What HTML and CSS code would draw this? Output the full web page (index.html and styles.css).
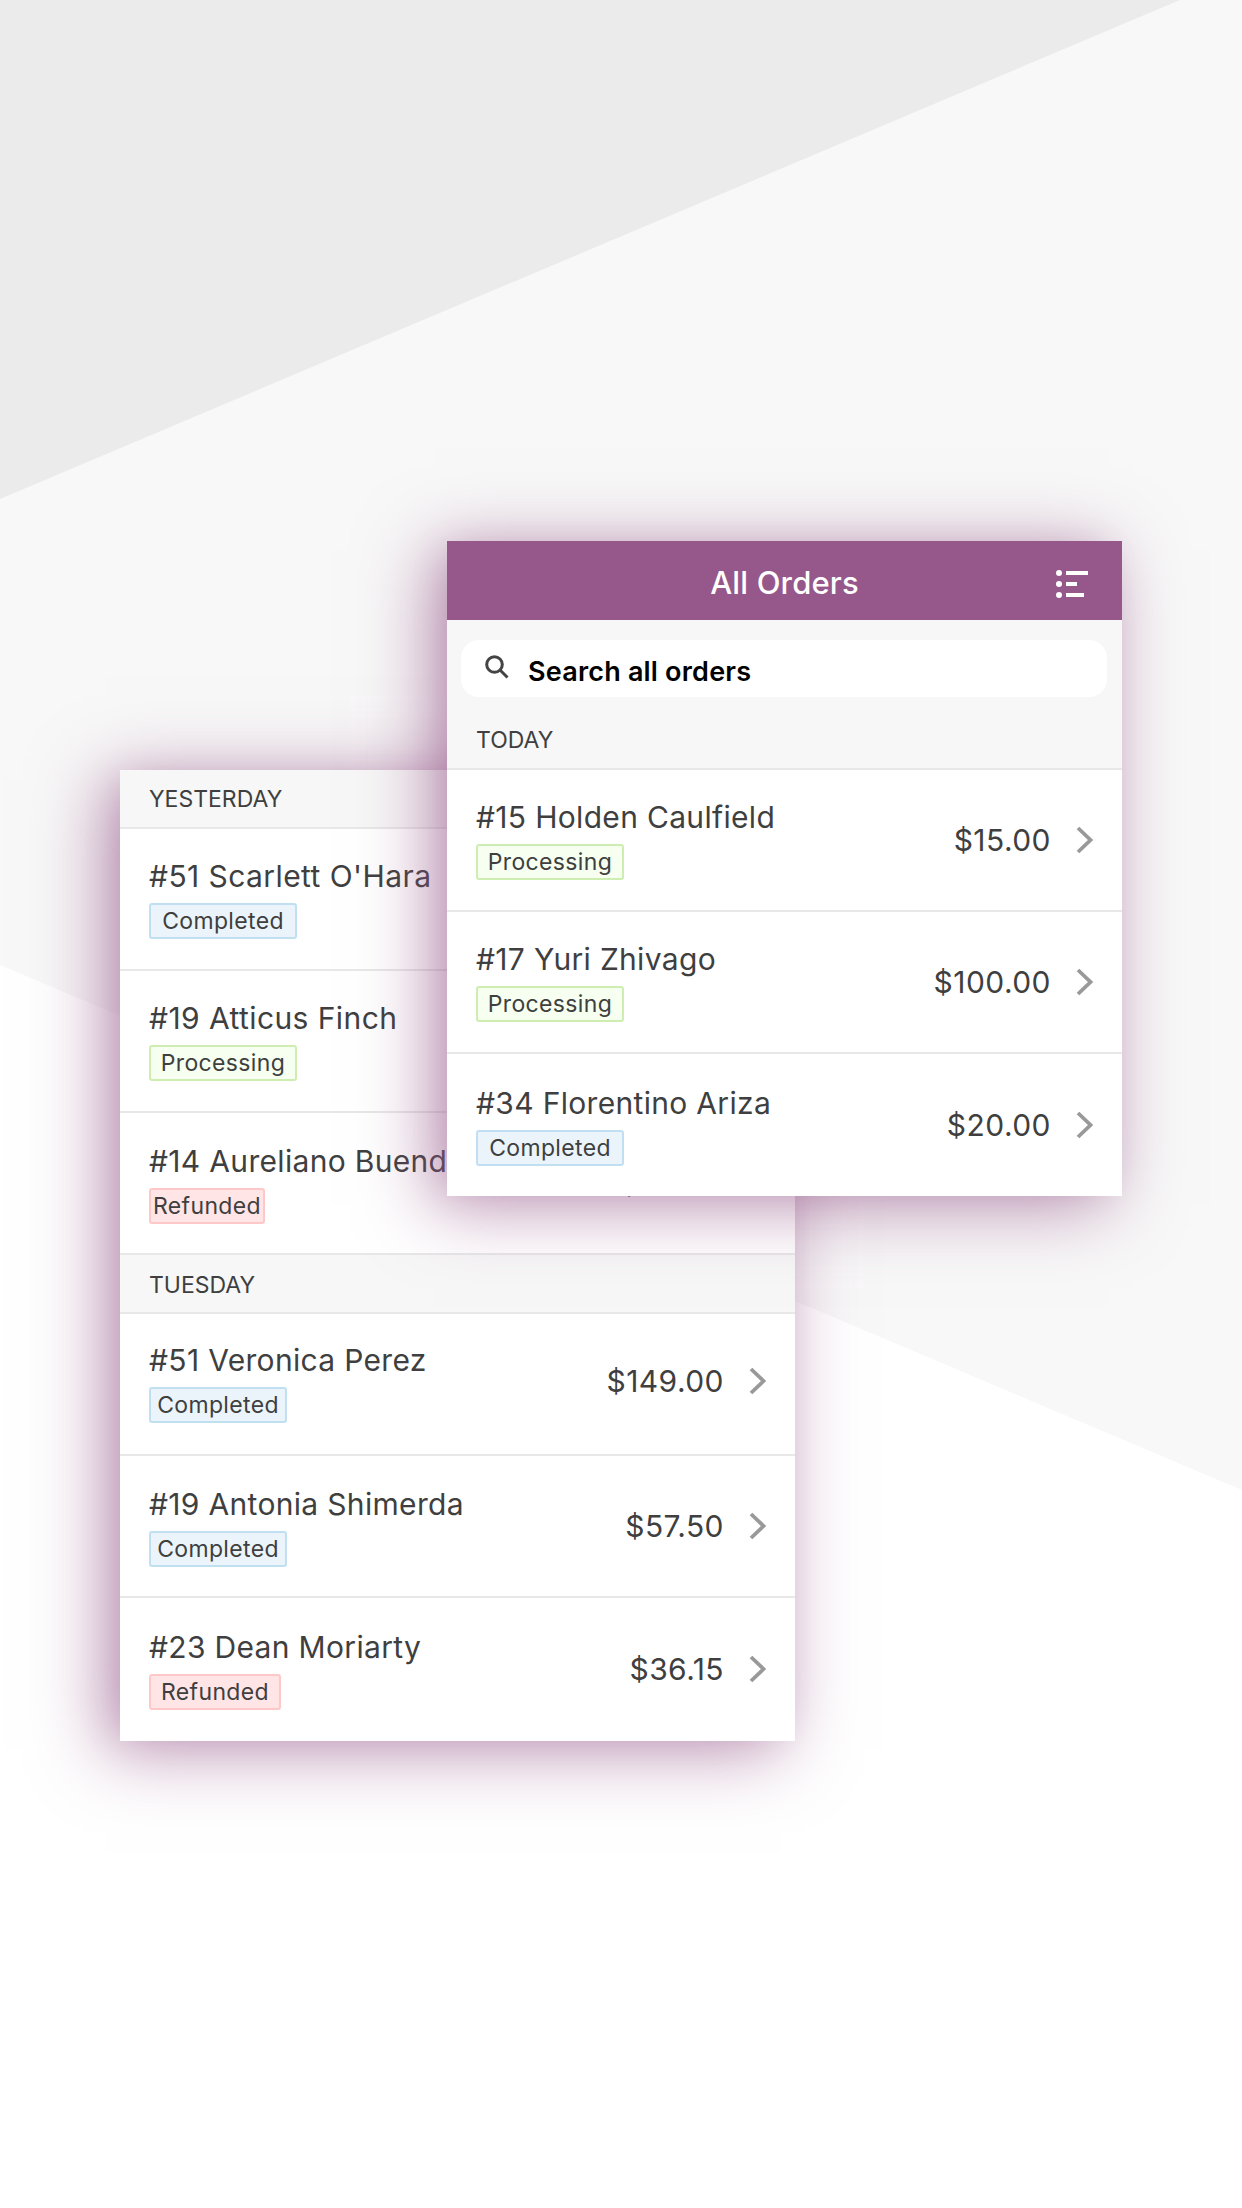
FILE: index.html
```html
<!DOCTYPE html>
<html lang="en">
<head>
<meta charset="utf-8">
<title>All Orders</title>
<link rel="stylesheet" href="styles.css">
</head>
<body>
<main class="stage">
  <svg class="backdrop" viewBox="0 0 1242 2208" aria-hidden="true">
    <polygon class="backdrop__light" points="0,0 1242,0 1242,1490 0,965"/>
    <polygon class="backdrop__dark" points="0,0 1180,0 0,499"/>
  </svg>

  <section class="card card--back">
    <h2 class="section-label">YESTERDAY</h2>
    <article class="row row--wide">
      <div class="row__info"><div class="row__name">#51 Scarlett O'Hara</div><span class="badge badge--completed badge--w148">Completed</span></div>
      <div class="row__price">$25.00</div>
      <svg class="chevron" viewBox="0 0 17 28"><path d="M2 2l12.500 12L2 26"/></svg>
    </article>
    <article class="row row--wide">
      <div class="row__info"><div class="row__name">#19 Atticus Finch</div><span class="badge badge--processing badge--w148">Processing</span></div>
      <div class="row__price">$42.00</div>
      <svg class="chevron" viewBox="0 0 17 28"><path d="M2 2l12.500 12L2 26"/></svg>
    </article>
    <article class="row">
      <div class="row__info"><div class="row__name">#14 Aureliano Buendía</div><span class="badge badge--refunded badge--w116">Refunded</span></div>
      <div class="row__price">$80.00</div>
      <svg class="chevron" viewBox="0 0 17 28"><path d="M2 2l12.500 12L2 26"/></svg>
    </article>
    <h2 class="section-label">TUESDAY</h2>
    <article class="row row--raised">
      <div class="row__info"><div class="row__name">#51 Veronica Perez</div><span class="badge badge--completed badge--w138">Completed</span></div>
      <div class="row__price">$149.00</div>
      <svg class="chevron" viewBox="0 0 17 28"><path d="M2 2l12.500 12L2 26"/></svg>
    </article>
    <article class="row">
      <div class="row__info"><div class="row__name">#19 Antonia Shimerda</div><span class="badge badge--completed badge--w138">Completed</span></div>
      <div class="row__price">$57.50</div>
      <svg class="chevron" viewBox="0 0 17 28"><path d="M2 2l12.500 12L2 26"/></svg>
    </article>
    <article class="row">
      <div class="row__info"><div class="row__name">#23 Dean Moriarty</div><span class="badge badge--refunded badge--w132">Refunded</span></div>
      <div class="row__price">$36.15</div>
      <svg class="chevron" viewBox="0 0 17 28"><path d="M2 2l12.500 12L2 26"/></svg>
    </article>
  </section>

  <section class="card card--front">
    <header class="appbar">
      <h1 class="appbar__title">All Orders</h1>
      <svg class="appbar__menu" viewBox="0 0 32 28" aria-hidden="true">
        <circle cx="3" cy="3" r="3"/><circle cx="3" cy="14" r="3"/><circle cx="3" cy="25" r="3"/>
        <rect x="10" y="1" width="22" height="4"/><rect x="10" y="12" width="11" height="4"/><rect x="10" y="23" width="18" height="4"/>
      </svg>
    </header>
    <div class="search-wrap">
      <div class="search">
        <svg class="search__icon" viewBox="0 0 24 24" aria-hidden="true"><circle cx="9.500" cy="9.500" r="7.800"/><path d="M15 15l7.500 7.500"/></svg>
        <span class="search__text">Search all orders</span>
      </div>
    </div>
    <h2 class="section-label">TODAY</h2>
    <article class="row">
      <div class="row__info"><div class="row__name">#15 Holden Caulfield</div><span class="badge badge--processing badge--w148">Processing</span></div>
      <div class="row__price">$15.00</div>
      <svg class="chevron" viewBox="0 0 17 28"><path d="M2 2l12.500 12L2 26"/></svg>
    </article>
    <article class="row">
      <div class="row__info"><div class="row__name">#17 Yuri Zhivago</div><span class="badge badge--processing badge--w148">Processing</span></div>
      <div class="row__price">$100.00</div>
      <svg class="chevron" viewBox="0 0 17 28"><path d="M2 2l12.500 12L2 26"/></svg>
    </article>
    <article class="row">
      <div class="row__info"><div class="row__name">#34 Florentino Ariza</div><span class="badge badge--completed badge--w148">Completed</span></div>
      <div class="row__price">$20.00</div>
      <svg class="chevron" viewBox="0 0 17 28"><path d="M2 2l12.500 12L2 26"/></svg>
    </article>
  </section>
</main>
</body>
</html>
```
FILE: styles.css
```css
* { box-sizing: border-box; }

html, body {
  margin: 0;
  background: #fff;
}

body {
  font-family: Inter, "Noto Sans", sans-serif;
  font-weight: 370;
  color: #3f3f3f;
}

.stage {
  position: relative;
  width: 1242px;
  height: 2208px;
  overflow: hidden;
  padding: 770px 0 0 120px;
}

.backdrop {
  position: absolute;
  inset: 0;
  width: 100%;
  height: 100%;
}
.backdrop__light { fill: #f8f8f8; }
.backdrop__dark { fill: #ebebeb; }

.card {
  position: relative;
  width: 675px;
  background: #f7f7f7;
  box-shadow:
    -14px 9px 68px rgba(150, 88, 138, 0.66),
    -10px 0 30px -6px rgba(150, 88, 138, 0.16);
}

.card--front {
  position: absolute;
  left: 447px;
  top: 541px;
}

.appbar {
  position: relative;
  height: 79px;
  padding-top: 4px;
  background: #96588a;
  display: flex;
  align-items: center;
  justify-content: center;
}
.appbar__title {
  margin: 0;
  font-size: 31px;
  font-weight: 500;
  letter-spacing: 0.15px;
  color: #fff;
}
.appbar__menu {
  position: absolute;
  right: 34px;
  top: 29px;
  width: 32px;
  height: 28px;
  fill: #fff;
}

.search-wrap {
  padding: 20px 15px 14px 14px;
}
.search {
  height: 57px;
  background: #fff;
  border-radius: 18px;
  display: flex;
  align-items: center;
  padding: 0 24px;
}
.search__icon {
  width: 24px;
  height: 24px;
  margin: -3px 19px 0 0;
  fill: none;
  stroke: #444;
  stroke-width: 3;
  flex: none;
}
.search__text {
  font-size: 27px;
  font-weight: 600;
  letter-spacing: 0.2px;
  color: #000;
  padding-top: 6px;
}

.section-label {
  margin: 0;
  height: 58.7px;
  padding: 2px 0 0 29px;
  display: flex;
  align-items: center;
  font-size: 23px;
  font-weight: 370;
  color: #3f3f3f;
  border-bottom: 2px solid #e8e8e8;
}

.row {
  height: 142.2px;
  background: #fff;
  border-bottom: 2px solid #e8e8e8;
  padding: 0 29px;
  display: flex;
  align-items: center;
}
.row:last-child { border-bottom: 0; }

.row__info {
  flex: 1;
  min-width: 0;
  display: flex;
  flex-direction: column;
  align-items: flex-start;
  gap: 9px;
}
.row__name {
  font-size: 30px;
  line-height: 36px;
  letter-spacing: 0.32px;
  white-space: nowrap;
}
.row--wide .row__name {
  letter-spacing: 0.42px;
}
.row__price {
  font-size: 30px;
  letter-spacing: 0.45px;
  margin-right: 25px;
}
.row--raised .row__price,
.row--raised .chevron {
  margin-top: -6px;
}
.row--raised .row__info {
  margin-top: -3px;
}

.chevron {
  width: 17px;
  height: 28px;
  flex: none;
  fill: none;
  stroke: #999;
  stroke-width: 3.800;
}

.badge {
  height: 36px;
  border: 2px solid;
  border-radius: 3px;
  font-size: 23px;
  letter-spacing: 0.35px;
  line-height: 30px;
  display: flex;
  align-items: center;
  justify-content: center;
}
.badge--completed { background: #ebf4fa; border-color: #c0e0f2; }
.badge--processing { background: #f6fff0; border-color: #cdeeb0; }
.badge--refunded { background: #ffe5e5; border-color: #ffc8c8; }
.badge--w148 { width: 148px; }
.badge--w138 { width: 138px; }
.badge--w132 { width: 132px; }
.badge--w116 { width: 116px; }
```
